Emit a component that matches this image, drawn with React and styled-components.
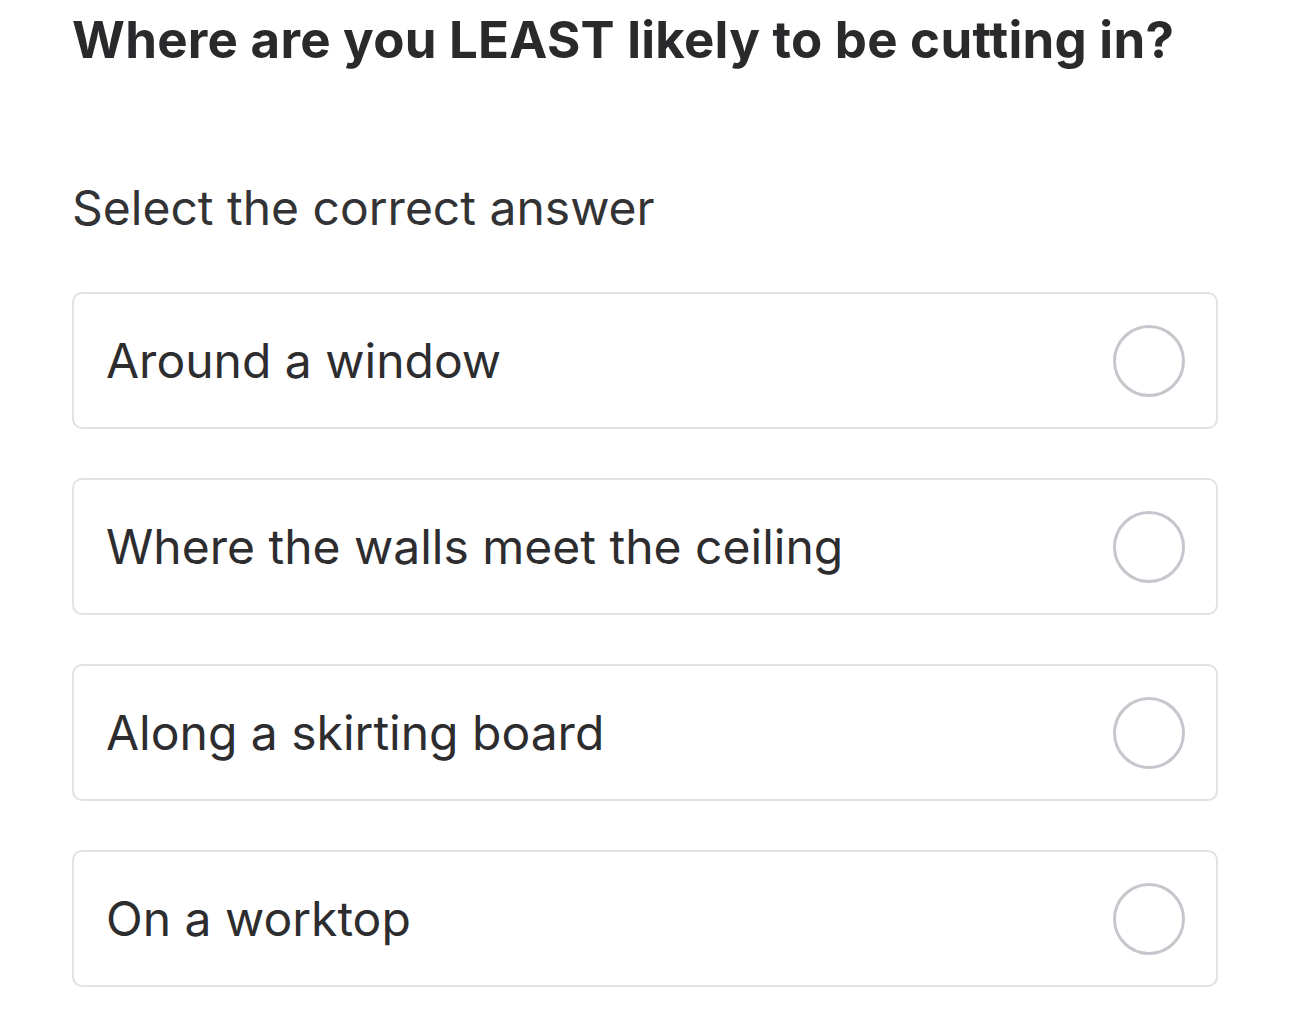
import React from "react";
import styled, { createGlobalStyle } from "styled-components";

const GlobalStyle = createGlobalStyle`
  html, body {
    margin: 0;
    padding: 0;
    background: #ffffff;
  }
`;

const Page = styled.main`
  display: flex;
  flex-direction: column;
  padding: 9px 72px 0 72px;
  width: 1290px;
  box-sizing: border-box;
  font-family: Inter, "Noto Sans", sans-serif;
  color: #2c2c2e;
`;

const Question = styled.h1`
  margin: 0;
  font-size: 51px;
  font-weight: 700;
  letter-spacing: 0.25px;
  line-height: 62px;
  color: #2a2a2c;
  white-space: nowrap;
`;

const Hint = styled.p`
  margin: 108px 0 0 0;
  font-size: 48px;
  font-weight: 400;
  line-height: 58px;
  color: #333336;
`;

const Options = styled.ul`
  list-style: none;
  margin: 55px 0 0 0;
  padding: 0;
  display: flex;
  flex-direction: column;
  gap: 49px;
  width: 1146px;
`;

const Option = styled.li`
  display: flex;
  align-items: center;
  justify-content: space-between;
  box-sizing: border-box;
  height: 137px;
  padding: 0 31px 0 32px;
  border: 2.5px solid #e1e1e6;
  border-radius: 10px;
  font-size: 48px;
  line-height: 58px;
  color: #2d2d30;
`;

const Radio = styled.span`
  width: 72px;
  height: 72px;
  box-sizing: border-box;
  border: 3px solid #c6c6cd;
  border-radius: 50%;
  flex-shrink: 0;
`;

const answers = [
  "Around a window",
  "Where the walls meet the ceiling",
  "Along a skirting board",
  "On a worktop",
];

export default function App() {
  return (
    <>
      <GlobalStyle />
      <Page>
        <Question>Where are you LEAST likely to be cutting in?</Question>
        <Hint>Select the correct answer</Hint>
        <Options>
          {answers.map((a) => (
            <Option key={a}>
              <span>{a}</span>
              <Radio />
            </Option>
          ))}
        </Options>
      </Page>
    </>
  );
}
